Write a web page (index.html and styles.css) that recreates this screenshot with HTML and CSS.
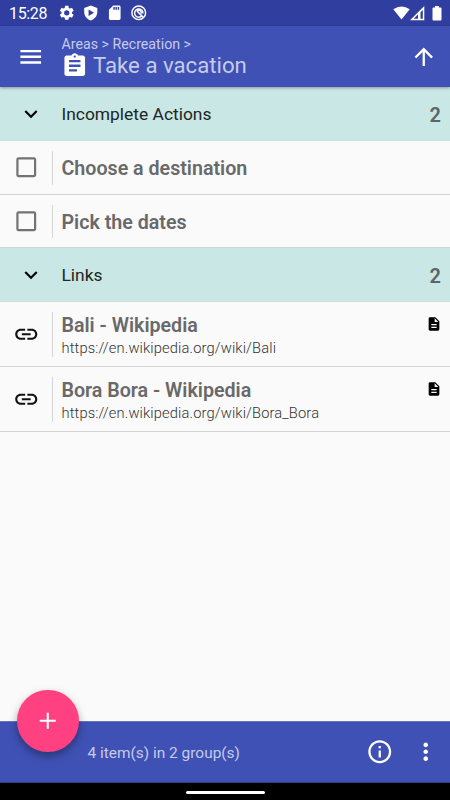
FILE: index.html
```html
<!DOCTYPE html>
<html lang="en">
<head>
<meta charset="utf-8">
<title>Take a vacation</title>
<link rel="stylesheet" href="styles.css">
</head>
<body>
<svg width="0" height="0" class="defs">
  <symbol id="chevron" viewBox="0 0 24 24"><path d="M7.41 8.59 12 13.17l4.59-4.58L18 10l-6 6-6-6z"/></symbol>
  <symbol id="box" viewBox="0 0 24 24"><path d="M19 5v14H5V5h14m0-2H5c-1.1 0-2 .9-2 2v14c0 1.100.9 2 2 2h14c1.100 0 2-.9 2-2V5c0-1.100-.9-2-2-2z"/></symbol>
  <symbol id="link" viewBox="0 0 24 24"><path d="M3.900 12c0-1.710 1.390-3.100 3.100-3.100h4V7H7c-2.760 0-5 2.240-5 5s2.240 5 5 5h4v-1.900H7c-1.710 0-3.100-1.390-3.100-3.100zM8 13h8v-2H8v2zm9-6h-4v1.900h4c1.710 0 3.100 1.390 3.100 3.100s-1.390 3.100-3.100 3.100h-4V17h4c2.760 0 5-2.240 5-5s-2.240-5-5-5z"/></symbol>
  <symbol id="doc" viewBox="0 0 24 24"><path d="M14 2H6c-1.100 0-2 .9-2 2v16c0 1.100.9 2 2 2h12c1.100 0 2-.9 2-2V8l-6-6zm2 16H8v-2h8v2zm0-4H8v-2h8v2zm-3-5V3.500L18.500 9H13z"/></symbol>
</svg>
<div class="screen">
  <div class="status">
    <span class="clock">15:28</span>
    <div class="notices">
      <svg viewBox="0 0 24 24"><path d="M19.140 12.940c.04-.3.06-.61.06-.94s-.02-.64-.07-.94l2.030-1.580c.18-.14.23-.41.12-.61l-1.920-3.320c-.12-.22-.37-.29-.59-.22l-2.390.96c-.5-.38-1.030-.7-1.620-.94L14.400 2.810c-.04-.24-.24-.41-.48-.41h-3.840c-.24 0-.43.17-.47.41L9.250 5.350C8.660 5.590 8.120 5.920 7.630 6.290L5.240 5.330c-.22-.08-.47 0-.59.22L2.740 8.870c-.12.21-.08.47.12.61l2.030 1.580c-.05.3-.09.63-.09.94s.02.64.07.94l-2.030 1.580c-.18.14-.23.41-.12.61l1.920 3.320c.12.22.37.29.59.22l2.390-.96c.5.38 1.030.7 1.620.94l.36 2.540c.05.24.24.41.48.41h3.840c.24 0 .44-.17.47-.41l.36-2.540c.59-.24 1.130-.56 1.620-.94l2.390.96c.22.08.47 0 .59-.22l1.920-3.320c.12-.22.07-.47-.12-.61l-2.010-1.580zM12 15.600A3.600 3.600 0 1 1 12 8.400a3.600 3.600 0 0 1 0 7.200z"/></svg>
      <svg viewBox="0 0 24 24"><path fill-rule="evenodd" d="M12 2 3 5.500v5.500c0 5.550 3.840 10 9 11.500 5.160-1.500 9-5.950 9-11.500V5.500zM9 7.500l7.500 4.500L9 16.500z"/></svg>
      <svg viewBox="0 0 24 24"><path d="M18 2h-8L4 8v12c0 1.100.9 2 2 2h12c1.100 0 2-.9 2-2V4c0-1.100-.9-2-2-2zm-6 6h-2V4h2v4zm3 0h-2V4h2v4zm3 0h-2V4h2v4z"/></svg>
      <svg viewBox="0 0 24 24" class="line"><circle cx="12" cy="12" r="9.400"/><path d="M15.500 17a5.700 5.700 0 1 1 2.200-4M9.500 9.500l8.500 8.500M10 10c2-2.500 6-1 5.500 3"/></svg>
    </div>
    <div class="radios">
      <svg width="17" height="14" viewBox="0 0 17 14"><path d="M8.500 13.500.3 3.300Q8.500-2.500 16.700 3.300z"/></svg>
      <svg width="15" height="15" viewBox="0 0 15 15"><path fill-rule="evenodd" d="M0 14.300 14.300 0v14.300zM3.800 12.800H8V8.300zM10.500 12.800H12.800V4L10.500 6.300z"/></svg>
      <svg class="battery" width="10" height="15" viewBox="0 0 10 15"><path d="M3 0h4v1.500h1.500q1 0 1 1v11q0 1-1 1h-7q-1 0-1-1v-11q0-1 1-1H3z"/></svg>
    </div>
  </div>
  <header class="appbar">
    <svg class="icon menu" viewBox="0 0 24 24"><path d="M3 18h18v-2H3v2zm0-5h18v-2H3v2zm0-7v2h18V6H3z"/></svg>
    <div class="heading">
      <div class="crumbs">Areas &gt; Recreation &gt;</div>
      <div class="title">
        <svg class="icon" viewBox="0 0 24 24"><path d="M19 3h-4.180C14.400 1.840 13.300 1 12 1c-1.300 0-2.400.84-2.820 2H5c-1.100 0-2 .9-2 2v14c0 1.100.9 2 2 2h14c1.100 0 2-.9 2-2V5c0-1.100-.9-2-2-2zm-7 0c.55 0 1 .45 1 1s-.45 1-1 1-1-.45-1-1 .45-1 1-1zm2 14H7v-2h7v2zm3-4H7v-2h10v2zm0-4H7V7h10v2z"/></svg>
        <span>Take a vacation</span>
      </div>
    </div>
    <svg class="icon up" viewBox="0 0 24 24"><path d="m4 12 1.410 1.410L11 7.830V20h2V7.830l5.580 5.590L20 12l-8-8-8 8z"/></svg>
  </header>
  <main class="list">
    <div class="group first"><svg class="chevron"><use href="#chevron"/></svg><span class="name">Incomplete Actions</span><span class="count">2</span></div>
    <div class="row"><div class="lead"><svg class="box"><use href="#box"/></svg></div><div class="text"><div class="item">Choose a destination</div></div></div>
    <div class="row last"><div class="lead"><svg class="box"><use href="#box"/></svg></div><div class="text"><div class="item">Pick the dates</div></div></div>
    <div class="group"><svg class="chevron"><use href="#chevron"/></svg><span class="name">Links</span><span class="count">2</span></div>
    <div class="row tall"><div class="lead"><svg><use href="#link"/></svg></div><div class="text"><div class="item">Bali - Wikipedia</div><div class="url">https://en.wikipedia.org/wiki/Bali</div></div><svg class="doc"><use href="#doc"/></svg></div>
    <div class="row tall"><div class="lead"><svg><use href="#link"/></svg></div><div class="text"><div class="item">Bora Bora - Wikipedia</div><div class="url">https://en.wikipedia.org/wiki/Bora_Bora</div></div><svg class="doc"><use href="#doc"/></svg></div>
  </main>
  <footer class="bottom">
    <div class="fab"><svg class="icon" viewBox="0 0 24 24"><path d="M19 12.900h-6.100v6.100h-1.800v-6.100H5v-1.800h6.100V5h1.800v6.100h6.100z"/></svg></div>
    <span class="summary">4 item(s) in 2 group(s)</span>
    <svg class="icon info" viewBox="0 0 24 24"><path d="M11 7h2v2h-2zm0 4h2v6h-2zm1-9C6.480 2 2 6.480 2 12s4.480 10 10 10 10-4.480 10-10S17.520 2 12 2zm0 18c-4.410 0-8-3.590-8-8s3.590-8 8-8 8 3.590 8 8-3.590 8-8 8z"/></svg>
    <svg class="icon more" viewBox="0 0 24 24"><path d="M12 8c1.100 0 2-.9 2-2s-.9-2-2-2-2 .9-2 2 .9 2 2 2zm0 2c-1.100 0-2 .9-2 2s.9 2 2 2 2-.9 2-2-.9-2-2-2zm0 6c-1.100 0-2 .9-2 2s.9 2 2 2 2-.9 2-2-.9-2-2-2z"/></svg>
  </footer>
  <div class="nav"><div class="pill"></div></div>
</div>
</body>
</html>
```
FILE: styles.css
```css
* { box-sizing: border-box; }
body { margin: 0; font-family: Roboto, sans-serif; background: #fafafa; }
svg { display: block; flex: none; fill: currentColor; }
.defs { position: absolute; }
.screen { width: 450px; height: 800px; display: flex; flex-direction: column; overflow: hidden; }

.status { height: 26px; flex: none; background: #303f9f; color: #fff; display: flex; align-items: center; padding: 0 8px 0 9px; }
.clock { width: 49px; font-size: 16px; line-height: 26px; padding-top: 2px; letter-spacing: -0.350px; }
.notices { display: flex; gap: 6.500px; flex: 1; }
.notices svg { width: 17.500px; height: 17.500px; }
.notices .line { fill: none; stroke: #fff; stroke-width: 2; }
.radios { display: flex; align-items: center; }
.radios .battery { margin-left: 7px; }

.appbar { height: 61px; flex: none; background: #3f51b5; color: #fff; display: flex; align-items: center; padding: 0 13px 0 16.500px; position: relative; box-shadow: 0 1px 3px rgba(0,0,0,.35); }
.icon { width: 27.500px; height: 27.500px; }
.heading { flex: 1; margin-left: 17.500px; height: 61px; padding-top: 9px; color: #c5cbe9; }
.crumbs { font-size: 14.200px; line-height: 19px; }
.title { display: flex; height: 26px; font-size: 22.200px; line-height: 23px; margin-left: -1px; gap: 5px; }
.title .icon { color: #fff; margin-top: -2px; }

.list { flex: 1; }
.group { height: 54px; background: #c9e7e4; border-bottom: 1px solid #d5dcdb; display: flex; align-items: center; padding: 0 9px 0 17.500px; }
.chevron { width: 26px; height: 26px; color: #000; }
.name { flex: 1; margin-left: 18px; padding-top: 1px; font-size: 17.400px; color: #202525; }
.count { font-size: 20px; font-weight: 600; color: #5d6666; padding-top: 2px; }
.row { height: 54px; border-bottom: 1px solid #d3d3d3; display: flex; padding: 10px 10px 9px 0; }
.row.last { height: 53px; }
.row.tall { height: 65px; }
.lead { width: 53px; flex: none; border-right: 1px solid #d6d6d6; display: flex; align-items: center; padding-left: 13px; color: #111; }
.lead svg { width: 26.500px; height: 26.500px; }
.lead .box { color: #727272; margin-top: -1px; }
.text { flex: 1; padding: 2px 0 0 8.500px; display: flex; flex-direction: column; justify-content: center; }
.item { font-size: 19.650px; line-height: 24px; font-weight: 600; color: #696969; }
.tall .text { padding-top: 3px; }
.url { font-size: 14.700px; line-height: 21px; font-weight: 300; letter-spacing: 0.130px; color: #333; }
.doc { width: 16px; height: 16px; color: #000; margin: 4px -1.500px 0 0; }

.bottom { height: 62px; flex: none; background: #3f51b5; border-top: 1px solid #6673b9; border-bottom: 1px solid #303f8f; color: #fff; display: flex; align-items: center; padding: 0 10.500px 0 87.500px; position: relative; }
.fab { position: absolute; left: 17.300px; top: -32px; width: 61.500px; height: 61.500px; border-radius: 50%; background: #ff4081; display: flex; align-items: center; justify-content: center; box-shadow: 0 4px 8px rgba(0,0,0,.35); }
.summary { flex: 1; font-size: 15.450px; color: #c5cbe9; padding-top: 1px; }
.more { margin-left: 19px; }
.nav { height: 17px; flex: none; background: #000; display: flex; justify-content: center; align-items: center; }
.pill { width: 79px; height: 3px; border-radius: 2px; background: #fff; margin-top: 1px; }
```
